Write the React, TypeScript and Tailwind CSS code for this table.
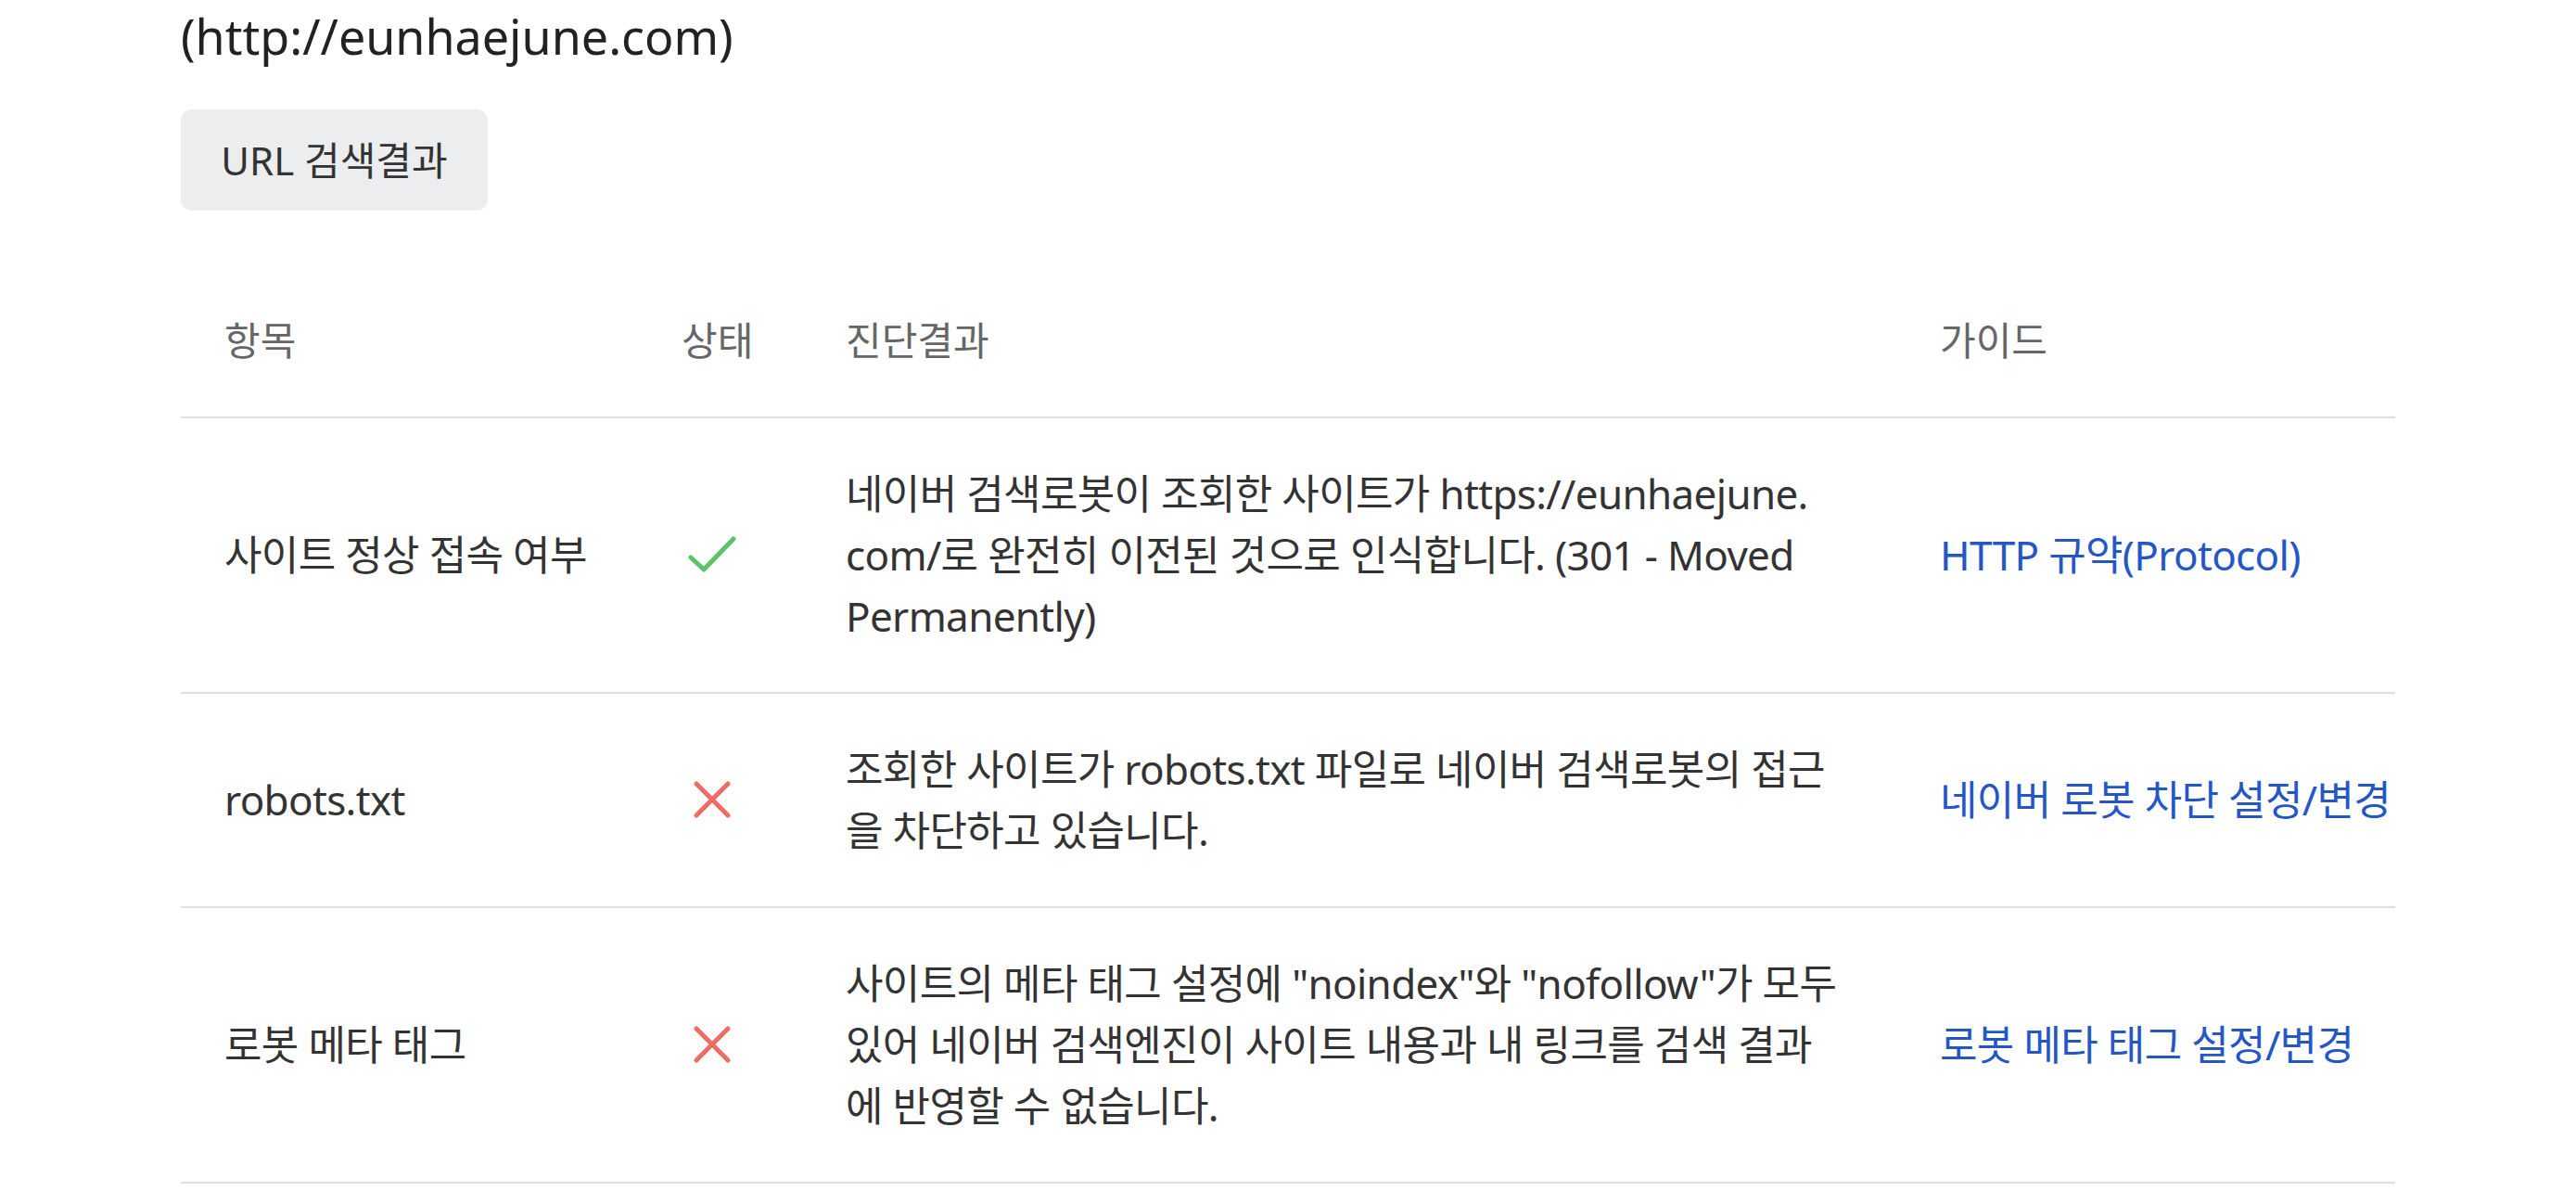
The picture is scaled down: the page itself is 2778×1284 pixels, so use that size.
import type { ReactNode } from 'react';

const font = { fontFamily: '"Noto Sans", "Noto Sans CJK KR", sans-serif' };

function CheckIcon() {
  return (
    <svg width="52" height="42" viewBox="0 0 52 42" fill="none">
      <polyline
        points="3,24 17,37 49,4"
        stroke="#5bc468"
        strokeWidth="5"
        strokeLinecap="round"
        strokeLinejoin="round"
      />
    </svg>
  );
}

function CrossIcon() {
  return (
    <svg width="40" height="40" viewBox="0 0 40 40" fill="none">
      <path d="M3 3L37 37M37 3L3 37" stroke="#ee6e65" strokeWidth="5" strokeLinecap="round" />
    </svg>
  );
}

interface RowProps {
  item: string;
  ok: boolean;
  lines: string[];
  guide: string;
}

function Row({ item, ok, lines, guide }: RowProps) {
  return (
    <div className="grid grid-cols-[509px_128px_1260px_491px] border-b-2 border-[#e0e0e0] pt-[48px] pb-[49px] text-[44px] leading-[66px] text-[#333] tracking-[-0.015em]">
      <div className="flex items-center pl-[47px]">{item}</div>
      <div className="flex items-center justify-center">{ok ? <CheckIcon /> : <CrossIcon />}</div>
      <div className="pl-[80px] whitespace-nowrap">
        {lines.map((l, i) => (
          <div key={i}>{l}</div>
        ))}
      </div>
      <div className="flex items-center whitespace-nowrap">
        <a className="text-[#2457c5]">{guide}</a>
      </div>
    </div>
  );
}

function Th({ children, className }: { children: ReactNode; className?: string }) {
  return <div className={className}>{children}</div>;
}

export default function App() {
  return (
    <div className="w-[2778px] h-[1284px] overflow-hidden bg-white" style={font}>
      <div className="w-[2388px] ml-[195px]">
        <h1 className="mt-[6px] text-[52px] leading-[66px] font-normal text-[#222]">
          (http://eunhaejune.com)
        </h1>
        <button
          type="button"
          className="mt-[46px] h-[109px] w-[331px] rounded-[12px] bg-[#ecedef] text-[42px] text-[#333]"
        >
          URL 검색결과
        </button>

        <div className="mt-[59px]">
          <div className="grid grid-cols-[509px_128px_1260px_491px] border-b-2 border-[#e0e0e0] pt-[48px] pb-[49px] text-[42px] leading-[66px] text-[#666]">
            <Th className="pl-[47px]">항목</Th>
            <Th className="pl-[31px]">상태</Th>
            <Th className="pl-[80px]">진단결과</Th>
            <Th>가이드</Th>
          </div>
          <Row
            item="사이트 정상 접속 여부"
            ok
            lines={[
              '네이버 검색로봇이 조회한 사이트가 https://eunhaejune.',
              'com/로 완전히 이전된 것으로 인식합니다. (301 - Moved',
              'Permanently)',
            ]}
            guide="HTTP 규약(Protocol)"
          />
          <Row
            item="robots.txt"
            ok={false}
            lines={['조회한 사이트가 robots.txt 파일로 네이버 검색로봇의 접근', '을 차단하고 있습니다.']}
            guide="네이버 로봇 차단 설정/변경"
          />
          <Row
            item="로봇 메타 태그"
            ok={false}
            lines={[
              '사이트의 메타 태그 설정에 "noindex"와 "nofollow"가 모두',
              '있어 네이버 검색엔진이 사이트 내용과 내 링크를 검색 결과',
              '에 반영할 수 없습니다.',
            ]}
            guide="로봇 메타 태그 설정/변경"
          />
        </div>
      </div>
    </div>
  );
}
